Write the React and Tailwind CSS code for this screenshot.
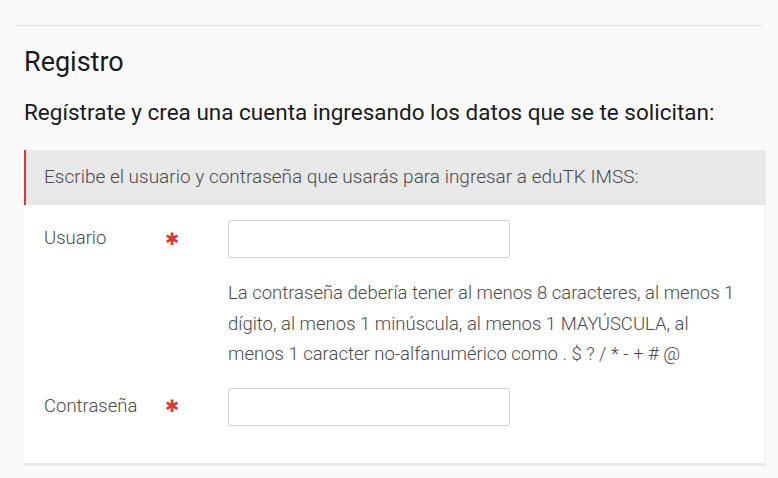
export default function App() {
  return (
    <div className="min-h-[478px] bg-[#fafafa] px-6 text-[#1a1a1a]" style={{ fontFamily: "Roboto, 'Liberation Sans', sans-serif" }}>
      <div className="h-[25px]" />
      <div className="-mx-2 border-t border-[#dedede]" />

      <h2 className="mt-[19px] text-[27px] leading-[34px] font-normal">Registro</h2>
      <h3 className="mt-[18px] text-[22.5px] leading-[30px] font-normal">
        Regístrate y crea una cuenta ingresando los datos que se te solicitan:
      </h3>

      <div className="mt-[23px] w-[742px] bg-white border-r border-[#eeeeee] border-b-[3px] border-b-[#e8e8e8]">
        <div className="h-[55px] flex items-center bg-[#e8e8e8] border-l-2 border-[#e0323f] pl-[18px] text-[19px] font-light text-[#4a4a4a]">
          Escribe el usuario y contraseña que usarás para ingresar a eduTK IMSS:
        </div>

        <div className="pl-5 pt-[15px] pb-[37px] text-[18.5px] font-light text-[#4a4a4a]">
          <div className="flex items-center">
            <span className="w-[121px]">Usuario</span>
            <span className="w-[63px] text-[#e0323f] text-[17px] leading-none font-normal">✱</span>
            <input type="text" className="w-[282px] h-[38px] rounded-[3px] border border-[#cfcfcf] bg-white" />
          </div>

          <p className="ml-[184px] mt-[20px] w-[512px] leading-[30.5px]">
            La contraseña debería tener al menos 8 caracteres, al menos 1 dígito, al menos 1 minúscula, al menos 1 MAYÚSCULA, al menos 1 caracter no-alfanumérico como . $ ? / * - + # @
          </p>

          <div className="flex items-center mt-[18px]">
            <span className="w-[121px]">Contraseña</span>
            <span className="w-[63px] text-[#e0323f] text-[17px] leading-none font-normal">✱</span>
            <input type="password" className="w-[282px] h-[38px] rounded-[3px] border border-[#cfcfcf] bg-white" />
          </div>
        </div>
      </div>
    </div>
  );
}
